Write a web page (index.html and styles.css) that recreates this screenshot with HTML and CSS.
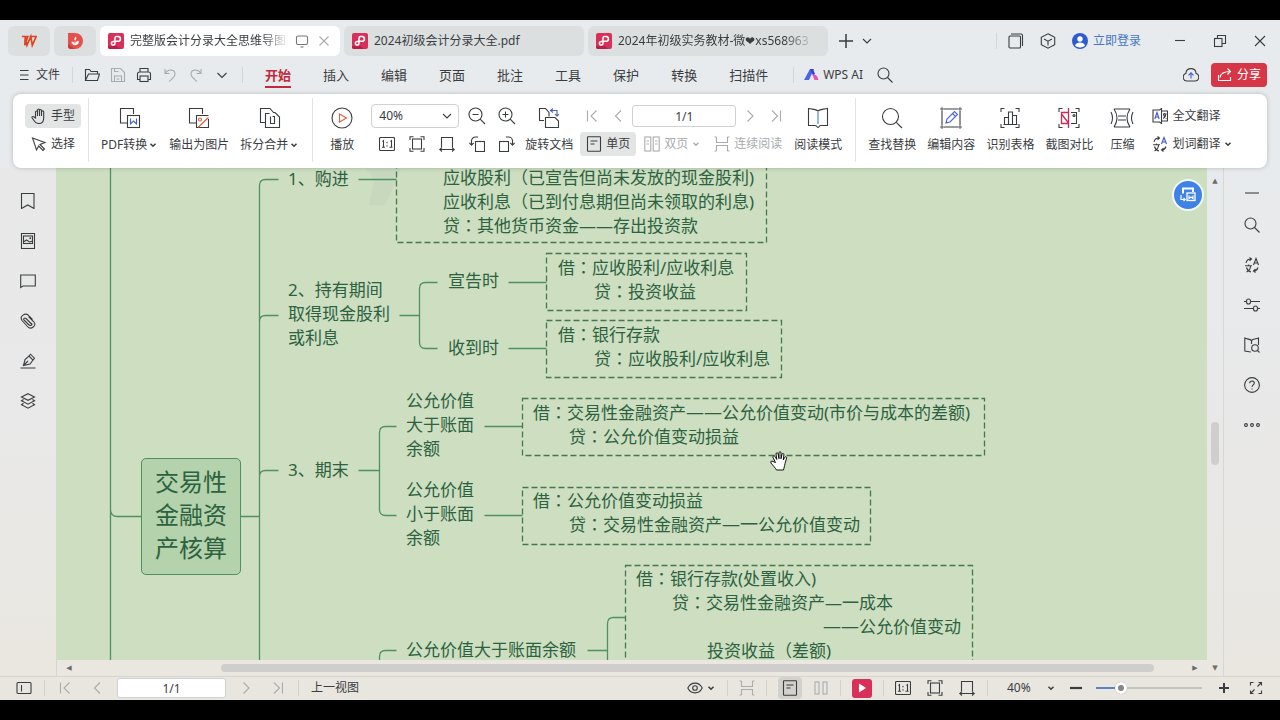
FILE: index.html
```html
<!DOCTYPE html>
<html lang="zh-CN">
<head>
<meta charset="utf-8">
<title>完整版会计分录大全思维导图.pdf - WPS</title>
<link rel="stylesheet" href="styles.css">
</head>
<body>
<svg class="sprite" aria-hidden="true">
  <symbol id="chev" viewBox="0 0 16 16"><path d="M4 6l4 4 4-4"/></symbol>
  <symbol id="pdf" viewBox="0 0 16 16"><rect width="16" height="16" rx="2" fill="#d8305a" stroke="none"/><path d="M0 13h9l3 3H2a2 2 0 0 1-2-2z" fill="#b8204a" stroke="none"/><path d="M7 8.500H5.500a1.800 1.800 0 1 0 1.500 1.800V5a1.500 1.500 0 0 1 1.500-1.500h1.500a2.200 2.200 0 0 1 0 4.800H7" stroke="#fff" stroke-width="1.500"/></symbol>
  <symbol id="first" viewBox="0 0 16 16"><path d="M3.500 2.500v11M12.500 2.500L7 8l5.500 5.500"/></symbol>
  <symbol id="prev" viewBox="0 0 16 16"><path d="M11 2.500L5.500 8l5.500 5.500"/></symbol>
  <symbol id="next" viewBox="0 0 16 16"><path d="M5.500 2.500L11 8l-5.500 5.500"/></symbol>
  <symbol id="last" viewBox="0 0 16 16"><path d="M12.500 2.500v11M4 2.500L9.500 8 4 13.500"/></symbol>
  <symbol id="search" viewBox="0 0 16 16"><circle cx="6.500" cy="6.500" r="5.500"/><path d="M10.500 10.500L15.500 15.500"/></symbol>
  <symbol id="one" viewBox="0 0 16 16"><rect x=".5" y="1.500" width="15" height="13" rx="1"/><path d="M3.500 5.500l1-.8v6.600M3 11.300h3M11.500 5.500l1-.8v6.600M10.500 11.300h3M8 6v1.300M8 9.300v1.300"/></symbol>
  <symbol id="fit" viewBox="0 0 16 16"><rect x="3.500" y="3" width="9" height="10"/><path d="M1 4V.8H4.500M11.500.8H15V4M15 12v3.200h-3.500M4.500 15.200H1V12"/></symbol>
  <symbol id="width" viewBox="0 0 16 16"><path d="M2.500 11V1.500h11V11M.8 13.500h14.400M3 11.500l-2.200 2 2.200 2M13 11.500l2.200 2-2.200 2"/></symbol>
  <symbol id="single" viewBox="0 0 16 16"><rect x="1.500" y=".8" width="13" height="14.400" rx=".5"/><path d="M4.500 5h7M4.500 8h4"/></symbol>
  <symbol id="double" viewBox="0 0 16 16"><rect x=".8" y="1" width="6" height="14"/><rect x="9.200" y="1" width="6" height="14"/><path d="M2.500 5h2.500M2.500 8h2.500M11 5h2.500M11 8h2.500"/></symbol>
  <symbol id="cont" viewBox="0 0 16 16"><path d="M2.500 1v5.500h11V1M2.500 15V9.500h11V15M.5 1h2M.5 15h2M13.500 1h2M13.500 15h2"/></symbol>
  <symbol id="trans" viewBox="0 0 16 16"><path d="M2 6a5 5 0 0 1 5-4M5.500.5L7.500 2 5.500 3.800M14 10.500a5 5 0 0 1-4 3.500M11.500 12.200L9.500 14l2 1.500M1 8.800h7M4.500 7.500v1.300M2.500 15c3-1.500 4-4 4-6M2.500 10.500c.5 2 2.500 4 4.500 4.500"/><path class="accent" d="M9.500 8L12 1.500 14.500 8M10.300 6h3.400"/></symbol>
</svg>

<div class="app">
  <header class="tabs">
    <button class="tab home" aria-label="WPS"><svg class="i" viewBox="0 0 16 16"><path d="M.8 3.500h3.400L6 12.300 9.800 3.500l1.500 8.800L15.200 3.500H8.500M4.300 3.500h2.500L3.800 12.300z" stroke="#dd4424" stroke-width="1.700"/></svg></button>
    <button class="tab home" aria-label="稻壳"><svg class="i" viewBox="0 0 16 16"><path d="M1 0h7a8 8 0 0 1 0 16H4a3 3 0 0 1-3-3z" fill="#e5504c" stroke="none"/><path d="M1 11v2a3 3 0 0 0 3 3h4z" fill="#c83c3c" stroke="none"/><path d="M8 12V8M8 12c-2 0-3.200-1.200-3.200-3.200C6.500 9 8 9.500 8 12c2.300 0 3.700-1.300 3.700-4C10 8 8 9.300 8 12" fill="#fff" stroke="#fff" stroke-width=".4"/><path d="M8 7.800c-1.200-1.400-.6-3.200.8-4.300 1 1.600.6 3.200-.8 4.300" fill="#fff" stroke="none"/></svg></button>
    <button class="tab doc on"><svg class="i"><use href="#pdf"/></svg><span class="name fade">完整版会计分录大全思维导图.pdf</span><svg class="i dim mon" viewBox="0 0 16 16"><rect x="2.500" y="3" width="11" height="8.500" rx="1.500"/><path d="M6.500 14h3"/></svg><svg class="i dim" viewBox="0 0 16 16"><path d="M3.500 3.500l9 9M12.500 3.500l-9 9"/></svg></button>
    <button class="tab doc"><svg class="i"><use href="#pdf"/></svg><span class="name">2024初级会计分录大全.pdf</span></button>
    <button class="tab doc"><svg class="i"><use href="#pdf"/></svg><span class="name fade">2024年初级实务教材-微❤xs568963</span></button>
    <button class="bare add" aria-label="新建"><svg class="i" viewBox="0 0 16 16"><path d="M8 1v14M1 8h14" stroke-width="1.500"/></svg></button>
    <button class="bare" aria-label="更多标签"><svg class="i"><use href="#chev"/></svg></button>
    <div class="window">
      <i class="sep tall"></i>
      <div class="pair"><button class="bare" aria-label="窗口"><svg class="i" viewBox="0 0 16 16"><rect x="1" y="3" width="11.500" height="12" rx="1"/><path d="M3 1h10a1.500 1.500 0 0 1 1.500 1.500V13"/></svg></button>
      <button class="bare" aria-label="应用"><svg class="i" viewBox="0 0 16 16"><path d="M8 .8l6.700 3.500v7.400L8 15.200l-6.700-3.500V4.300zM4 6l4 2.200L12 6M8 8.200v4.300"/></svg></button></div>
      <button class="bare login"><svg class="i" viewBox="0 0 16 16"><circle cx="8" cy="8" r="8" fill="#2f5bd0" stroke="none"/><circle cx="8" cy="6" r="2.700" fill="#fff" stroke="none"/><path d="M3 12.500c1-4 9-4 10 0-2 2.500-8 2.500-10 0z" fill="#fff" stroke="none"/></svg>立即登录</button>
      <div class="wbtns"><button class="bare" aria-label="最小化"><svg class="i" viewBox="0 0 16 16"><path d="M3 7.500h10"/></svg></button>
      <button class="bare" aria-label="还原"><svg class="i" viewBox="0 0 16 16"><rect x="2.500" y="5.500" width="7.500" height="8"/><path d="M5.500 5.500v-3h8v8H10"/></svg></button>
      <button class="bare" aria-label="关闭"><svg class="i" viewBox="0 0 16 16"><path d="M3 3l10 10M13 3L3 13"/></svg></button></div>
    </div>
  </header>

  <nav class="menu">
    <button class="bare file"><svg class="i s12" viewBox="0 0 12 12"><path d="M2 1.500h8.500M2 6h8.500M2 10.500h8.500"/></svg>文件</button>
    <i class="sep"></i>
    <div class="quick">
      <button class="bare" aria-label="打开"><svg class="i" viewBox="0 0 16 16"><path d="M1.500 13.500V2.500h4l1.500 2h6.500v2.500M1.500 13.500L4.500 7h11l-2 6.500z"/></svg></button>
      <button class="bare dim" aria-label="保存"><svg class="i" viewBox="0 0 16 16"><path d="M1.500 1.500h9l4 4v9h-13zM4.500 14.500V9h7v5.500M6.500 12h3M4.500 1.500v3h4"/></svg></button>
      <button class="bare" aria-label="打印"><svg class="i" viewBox="0 0 16 16"><path d="M4 5V1.500h8V5M4 12.500H1.500V7a2 2 0 0 1 2-2h9a2 2 0 0 1 2 2v5.500H12"/><rect x="4" y="9" width="8" height="5.500"/></svg></button>
      <button class="bare dim" aria-label="撤销"><svg class="i" viewBox="0 0 16 16"><path d="M3 2v4.500h4.500M3.500 6C6.500 1.500 13 2.500 13 7c0 3-3 5-6 7.500"/></svg></button>
      <button class="bare dim" aria-label="重做"><svg class="i" viewBox="0 0 16 16"><path d="M13 2v4.500H8.500M12.500 6C9.500 1.500 3 2.500 3 7c0 3 3 5 6 7.500"/></svg></button>
      <button class="bare" aria-label="更多"><svg class="i" viewBox="0 0 16 16"><path d="M3.500 6L8 10.500 12.500 6"/></svg></button>
    </div>
    <i class="sep"></i>
    <div class="cats">
      <button class="bare cur">开始</button><button class="bare">插入</button><button class="bare">编辑</button><button class="bare">页面</button><button class="bare">批注</button><button class="bare">工具</button><button class="bare">保护</button><button class="bare">转换</button><button class="bare">扫描件</button>
    </div>
    <i class="sep"></i>
    <button class="bare ai"><svg class="i" viewBox="0 0 16 16"><path d="M0 13L6 2h4L5 13z" fill="#4a66e8" stroke="none"/><path d="M6 2h3l2 5-2 1.500z" fill="#3b3fd0" stroke="none"/><path d="M8.500 8c3-1 5 .5 6 5h-4z" fill="#e255b4" stroke="none"/></svg>WPS AI</button>
    <button class="bare" aria-label="搜索"><svg class="i"><use href="#search"/></svg></button>
    <button class="bare cloud" aria-label="云"><svg class="i" viewBox="0 0 16 16"><path d="M4 14a3.800 3.800 0 0 1-1.200-7.400C3.500 0 12.500 0 13.200 6.600A3.800 3.800 0 0 1 12 14z"/><path d="M8 11.500V6M5.500 8.300L8 5.800l2.500 2.500" stroke="#3d5fd0"/></svg></button>
    <button class="share"><svg class="i" viewBox="0 0 16 16"><path d="M1.500 8v5.500h12V10M3 10.500c.5-4 4-6 10.500-6M10.500 1.500l3 3-3 3"/></svg>分享</button>
  </nav>

  <section class="ribbon">
    <div class="stack">
      <button class="small on"><svg class="i" viewBox="0 0 16 16"><path d="M4.500 10V4a1 1 0 0 1 2 0v4V2a1 1 0 0 1 2 0v6V2.500a1 1 0 0 1 2 0V8 4a1 1 0 0 1 2.200 0v6c0 3.500-1.700 5.500-4.700 5.500S4 14 1.200 10c-.7-1.200.6-2 1.500-1.200z"/></svg>手型</button>
      <button class="small"><svg class="i" viewBox="0 0 16 16"><path d="M1.500 2l12.500 4.500L9 8.500l4.500 4.500-1.500 1.500L7.700 10 5.500 14z"/></svg>选择</button>
    </div>
    <i class="sep s1"></i>
    <div class="bigs">
      <button class="big"><svg class="i b" viewBox="0 0 24 24"><path d="M9 17H2.500V2.500h13V8"/><rect x="9.500" y="9.500" width="12" height="12"/><path d="M12.500 12.500v5.500l3-3 3 3v-5.500" stroke="#3f63cc"/></svg><span>PDF转换<svg class="i c"><use href="#chev"/></svg></span></button>
      <button class="big"><svg class="i b" viewBox="0 0 24 24"><path d="M9 17H2.500V2.500h13V8"/><path d="M21.500 13v8.500h-12v-12h12"/><circle cx="13" cy="13.500" r="1.500" stroke="#d9613a"/><path d="M11 21.500l10.500-10" stroke="#d9613a"/></svg><span>输出为图片</span></button>
      <button class="big"><svg class="i b" viewBox="0 0 24 24"><path d="M7.500 16.500h-5v-14h9.500l3.500 4"/><path d="M11.500 7.500h-4v14h14V11L17 6.500h-2M12.500 10.500v7h4v-7h-2"/></svg><span>拆分合并<svg class="i c"><use href="#chev"/></svg></span></button>
    </div>
    <i class="sep s2"></i>
    <button class="big"><svg class="i b" viewBox="0 0 24 24"><circle cx="12" cy="12" r="10"/><path d="M9.500 8l7 4-7 4z" stroke="#d9613a"/></svg><span>播放</span></button>
    <div class="stack zoom">
      <div class="row"><label class="pick"><select aria-label="缩放比例"><option>40%</option></select><svg class="i"><use href="#chev"/></svg></label>
        <button class="ib" aria-label="缩小"><svg class="i l" viewBox="0 0 18 18"><circle cx="7.500" cy="7.500" r="6.500"/><path d="M12.200 12.200L17 17M4.500 7.500h6"/></svg></button>
        <button class="ib" aria-label="放大"><svg class="i l" viewBox="0 0 18 18"><circle cx="7.500" cy="7.500" r="6.500"/><path d="M12.200 12.200L17 17M4.500 7.500h6M7.500 4.500v6"/></svg></button></div>
      <div class="row in">
        <button class="ib" aria-label="实际大小"><svg class="i"><use href="#one"/></svg></button>
        <button class="ib" aria-label="适合页面"><svg class="i"><use href="#fit"/></svg></button>
        <button class="ib" aria-label="适合宽度"><svg class="i"><use href="#width"/></svg></button>
        <button class="ib" aria-label="向左旋转"><svg class="i" viewBox="0 0 16 16"><rect x="6.500" y="5.500" width="9" height="10"/><path d="M9 1H6.500A4 4 0 0 0 2.500 5v4M.3 6.800l2.200 2.400 2.200-2.400"/></svg></button>
        <button class="ib" aria-label="向右旋转"><svg class="i" viewBox="0 0 16 16"><rect x=".5" y="5.500" width="9" height="10"/><path d="M7 1h2.500a4 4 0 0 1 4 4v4M11.300 6.800l2.200 2.400 2.200-2.400"/></svg></button>
      </div>
    </div>
    <button class="big rot"><svg class="i b" viewBox="0 0 24 24"><path d="M7 14.500H2.500v-12h6l3.500 4v4"/><path d="M8.500 11.500h9.500l3.500 3.500v6.500h-13z"/><path d="M14 4.500h6v5M16 2.500l-2.500 2L16 6.500M18 8l2 2.200L22 8" stroke="#4a62c4"/></svg><span>旋转文档</span></button>
    <div class="stack">
      <div class="row nav">
        <button class="ib dim" aria-label="首页"><svg class="i"><use href="#first"/></svg></button>
        <button class="ib dim" aria-label="上一页"><svg class="i"><use href="#prev"/></svg></button>
        <input class="page" aria-label="页码" value="1/1">
        <button class="ib dim" aria-label="下一页"><svg class="i"><use href="#next"/></svg></button>
        <button class="ib dim" aria-label="末页"><svg class="i"><use href="#last"/></svg></button>
      </div>
      <div class="row views">
        <button class="small on"><svg class="i"><use href="#single"/></svg>单页</button>
        <button class="small flat dim"><svg class="i"><use href="#double"/></svg>双页<svg class="i c"><use href="#chev"/></svg></button>
        <button class="small flat dim"><svg class="i"><use href="#cont"/></svg>连续阅读</button>
      </div>
    </div>
    <button class="big read"><svg class="i b" viewBox="0 0 24 24"><path d="M12 5c-2-2-5-1.500-9.500-2.500v17h6.500c2 0 2 2 3 2s1-2 3-2h6.500v-17C17 3.500 14 3 12 5"/><path d="M12 6v12" stroke="#3f7fd0"/></svg><span>阅读模式</span></button>
    <i class="sep s3"></i>
    <div class="bigs">
      <button class="big"><svg class="i b" viewBox="0 0 24 24"><circle cx="10.500" cy="10.500" r="8"/><path d="M16.300 16.300L22 22"/></svg><span>查找替换</span></button>
      <button class="big"><svg class="i b" viewBox="0 0 24 24"><path d="M5 3h14M5 21h14M3 5v14M21 5v14" /><path d="M2 2h2v2H2zM20 2h2v2h-2zM2 20h2v2H2zM20 20h2v2h-2z" stroke-width=".8"/><path d="M7 17l1-4 7.500-7.500 3 3L11 16zM13.500 7.500l3 3" stroke="#4a62d4"/></svg><span>编辑内容</span></button>
      <button class="big"><svg class="i b" viewBox="0 0 24 24"><path d="M3 6V2.500h3.500M17.500 2.500H21V6M21 18v3.500h-3.500M6.500 21.500H3V18"/><path d="M6.500 18.500v-7h4v7zM10.500 18.500V6h4v12.500zM14.500 18.500V9.500h4v9zM5.500 18.500h14"/></svg><span>识别表格</span></button>
      <button class="big"><svg class="i b" viewBox="0 0 24 24"><path d="M2 6V2.500h3.500M18.500 2.500H22V6M22 18v3.500h-3.500M5.500 21.500H2V18M14 6.500h5.500v11H14"/><circle cx="17" cy="9.500" r="1"/><path d="M11.500 2v20M11.500 6.500h-7v11h7M4.500 8l7 9" stroke="#d02850" stroke-width="1.300"/></svg><span>截图对比</span></button>
      <button class="big press"><svg class="i b" viewBox="0 0 24 24"><path d="M4 3h16M4 21h16M8 10h8M8 14h8M4 3c4 6 4 12 0 18M20 3c-4 6-4 12 0 18M1 6c2 4 2 8 0 12M23 6c-2 4-2 8 0 12"/></svg><span>压缩</span></button>
    </div>
    <div class="stack last">
      <button class="small flat"><svg class="i" viewBox="0 0 16 16"><path d="M7.500 2H1v12h6.500l2 1.500v-15zM10 3h5.500v10H10M11 6h3.500M12.700 5v1M11.300 10.500c1.500-1 2.500-2.500 2.500-4.500M11.500 6.500c.5 2 1.500 3.300 3 4"/><path class="accent" d="M2.800 11L5 4.500 7.200 11M3.500 9h3"/></svg>全文翻译</button>
      <button class="small flat two"><svg class="i"><use href="#trans"/></svg>划词翻译<svg class="i c"><use href="#chev"/></svg></button>
    </div>
  </section>

  <main class="work">
    <aside class="side left">
      <button class="bare" aria-label="书签"><svg class="i" viewBox="0 0 16 16"><path d="M1.500.5h12.500v15L7.800 12 1.500 15.500z"/></svg></button>
      <button class="bare" aria-label="缩略图"><svg class="i" viewBox="0 0 16 16"><rect x="1.500" y=".5" width="13" height="15"/><rect x="3.500" y="3" width="9" height="7.500"/><path d="M3.500 9l3-2 3 2 3-1"/><circle cx="10.300" cy="5.300" r=".4"/></svg></button>
      <button class="bare" aria-label="批注"><svg class="i" viewBox="0 0 16 16"><path d="M.7 14.500V2h14.600v11H3z"/></svg></button>
      <button class="bare" aria-label="附件"><svg class="i" viewBox="0 0 16 16"><path d="M12.500 6.500L8.200 2.200C5.500-.5-1 3 2 7.500l5.500 6c3.500 4 9.500-1 6.500-4.500L8.500 3.500M11.500 11L6 5.500C4.500 4 3 6 4 7l4.500 4.500c2 2 4.500.5 3-1.500"/></svg></button>
      <button class="bare" aria-label="签名"><svg class="i" viewBox="0 0 16 16"><path d="M.5 15h15M3.500 12.500l1.500-6 4-3.500 4 4-3 4zM3.500 12.500L8 8M9 3l1.500-1.800 4 4L13 7"/></svg></button>
      <button class="bare" aria-label="图层"><svg class="i" viewBox="0 0 16 16"><path d="M8 .7l6.500 3.300L8 7.300 1.500 4zM3.500 6.500l-2 1.300L8 11.200l6.500-3.400-2-1.300M3.500 10.300l-2 1.400L8 15.200l6.500-3.500-2-1.400"/></svg></button>
    </aside>

    <div class="canvas">
      <svg class="wires" aria-hidden="true">
        <g transform="translate(-55.500 -167.500)">
          <path class="mark" d="M368 205l6-25-8-12h34l-4 12-12 25z"/>
          <path d="M110 167v494M110 509q0 7 7 7h24M240 516h19M259 661V185q0-6 6-6h13M259 321q0-6 6-6h13M259 476q0-6 6-6h13M358 179h38
          M399 315h20M437 282h-12q-6 0-6 6v54q0 6 6 6h12M508 282h38M508 348h38
          M358 470h21M396 426h-11q-6 0-6 6v77q0 6 6 6h11M484 426h38M484 515h38
          M379 661v-5q0-6 6-6h11M587 650h20M607 661v-38q0-6 6-6h12"/>
          <g class="dash"><rect x="396" y="120" width="370" height="122"/><rect x="546" y="253" width="200" height="57"/><rect x="546" y="320" width="235" height="57"/><rect x="522" y="398" width="462" height="57"/><rect x="522" y="487" width="348" height="57"/><rect x="625" y="565" width="347" height="140"/></g>
        </g>
      </svg>
      <div class="node root">交易性<br>金融资<br>产核算</div>
      <div class="node n-buy">1、购进</div>
      <div class="node n-buy-e">应收股利<b>（</b>已宣告但尚未发放的现金股利)<br>应收利息<b>（</b>已到付息期但尚未领取的利息)<br>贷<b>：</b>其他货币资金——存出投资款</div>
      <div class="node n-hold">2、持有期间<br>取得现金股利<br>或利息</div>
      <div class="node n-ann">宣告时</div>
      <div class="node n-ann-e"><p>借<b>：</b>应收股利/应收利息</p><p class="t">贷<b>：</b>投资收益</p></div>
      <div class="node n-rec">收到时</div>
      <div class="node n-rec-e"><p>借<b>：</b>银行存款</p><p class="t">贷<b>：</b>应收股利/应收利息</p></div>
      <div class="node n-end">3、期末</div>
      <div class="node n-gt">公允价值<br>大于账面<br>余额</div>
      <div class="node n-gt-e"><p>借<b>：</b>交易性金融资产<span class="long">——</span>公允价值变动(市价与成本的差额)</p><p class="t">贷<b>：</b>公允价值变动损益</p></div>
      <div class="node n-lt">公允价值<br>小于账面<br>余额</div>
      <div class="node n-lt-e"><p>借<b>：</b>公允价值变动损益</p><p class="t">贷<b>：</b>交易性金融资产<span class="long">—一</span>公允价值变动</p></div>
      <div class="node n-sell">公允价值大于账面余额</div>
      <div class="node n-sell-e"><p>借<b>：</b>银行存款(处置收入)</p><p class="t">贷<b>：</b>交易性金融资产—一成本</p><p class="t4"><span class="long">——</span>公允价值变动</p><p class="t2">投资收益<b>（</b>差额)</p></div>
      <svg class="hand" viewBox="0 0 18 20" aria-hidden="true"><path d="M5.500 11.500L3 6.500C2.500 5 4.300 4.300 5 5.500l1.800 3L6 3c0-1.500 1.800-1.700 2-.3l1 5V1.800c0-1.500 2-1.500 2 0v6l1-4.500c.3-1.400 2-1 1.900.3L13.300 9l1.500-2.700c.7-1.200 2.200-.4 1.800.8L15 12.500c-.5 3-1 4-1.500 6.500h-7C5.500 17 2.500 14 1 12c-1-1.500.7-2.600 2-1.500z" fill="#fff" stroke="#111"/></svg>
      <button class="float" aria-label="转为Word"><svg class="i" viewBox="0 0 16 16"><path d="M3 6.500V1.500h10V5" stroke-width="2"/><rect x="7" y="6" width="8" height="7.500" stroke-width="1.300"/><path d="M9 8.500v3l2-1.500 2 1.500v-3M1 8v4.500h4M3.500 10.800L5.200 12.500 3.500 14.200" stroke-width="1.200"/></svg></button>
    </div>

    <div class="vbar"><button class="arr" aria-label="向上">▲</button><i class="thumb"></i></div>

    <aside class="side right">
      <button class="bare minus" aria-label="收起"><svg class="i" viewBox="0 0 16 16"><path d="M1 8h14" stroke="#8b8e90" stroke-width="2"/></svg></button>
      <button class="bare" aria-label="查找"><svg class="i"><use href="#search"/></svg></button>
      <button class="bare mono" aria-label="翻译"><svg class="i"><use href="#trans"/></svg></button>
      <button class="bare" aria-label="设置"><svg class="i" viewBox="0 0 16 16"><path d="M0 4.500h2.500M6.500 4.500H16M0 11.500h9.500M13.500 11.500H16"/><rect x="2.500" y="2" width="4" height="5" rx="2"/><rect x="9.500" y="9" width="4" height="5" rx="2"/></svg></button>
      <button class="bare" aria-label="查词"><svg class="i" viewBox="0 0 16 16"><path d="M7.500 3.500C6 2 3 2 .8 1v13l6 1M7.500 3.500V7M7.500 3.500C9 2 12 2 14.500 1v7"/><circle cx="11" cy="11" r="3.300"/><path d="M13.400 13.400L15.500 15.500"/></svg></button>
      <button class="bare" aria-label="帮助"><svg class="i" viewBox="0 0 16 16"><circle cx="8" cy="8" r="7.400"/><path d="M5.700 6.300c0-3 4.600-3 4.600-.2C10.300 8 8 7.800 8 10M8 11.500v1"/></svg></button>
      <button class="bare" aria-label="更多"><svg class="i" viewBox="0 0 16 16"><circle cx="2" cy="8" r="1.400"/><circle cx="8" cy="8" r="1.400"/><circle cx="14" cy="8" r="1.400"/></svg></button>
    </aside>

    <div class="hbar"><button class="arr" aria-label="向左">◀</button><div class="track"><i class="thumb"></i></div><button class="arr r" aria-label="向右">▶</button></div>
    <div class="corner"><button class="arr" aria-label="向下">▼</button></div>
  </main>

  <footer class="status">
    <button class="bare" aria-label="侧栏"><svg class="i" viewBox="0 0 16 16"><rect x="1" y="2.500" width="14" height="11" rx="1"/><path d="M5.500 5v6.500"/></svg></button>
    <i class="sep"></i>
    <div class="pair dim"><button class="bare" aria-label="首页"><svg class="i"><use href="#first"/></svg></button><button class="bare" aria-label="上一页"><svg class="i"><use href="#prev"/></svg></button></div>
    <input class="page" aria-label="当前页" value="1/1">
    <div class="pair dim"><button class="bare" aria-label="下一页"><svg class="i"><use href="#next"/></svg></button><button class="bare" aria-label="末页"><svg class="i"><use href="#last"/></svg></button></div>
    <i class="sep"></i>
    <button class="bare">上一视图</button>
    <div class="sview">
      <button class="bare eye" aria-label="护眼"><svg class="i" viewBox="0 0 16 16"><path d="M.8 8C4 1.500 12 1.500 15.200 8 12 14.500 4 14.500.8 8z"/><circle cx="8" cy="8" r="2.300"/></svg><svg class="i c"><use href="#chev"/></svg></button>
      <i class="sep"></i>
      <button class="bare dim" aria-label="连续"><svg class="i"><use href="#cont"/></svg></button>
      <i class="sep"></i>
      <button class="bare sel" aria-label="单页"><svg class="i"><use href="#single"/></svg></button>
      <button class="bare dim" aria-label="双页"><svg class="i" viewBox="0 0 16 16"><rect x="2" y="2" width="4" height="12"/><rect x="10" y="2" width="4" height="12"/></svg></button>
      <i class="sep"></i>
      <button class="play" aria-label="播放"><svg class="i" viewBox="0 0 16 16"><path d="M5.500 4.500L11 8l-5.500 3.500z" fill="#fff"/></svg></button>
      <i class="sep"></i>
      <div class="pair"><button class="bare" aria-label="实际大小"><svg class="i"><use href="#one"/></svg></button><button class="bare" aria-label="适合页面"><svg class="i"><use href="#fit"/></svg></button><button class="bare" aria-label="适合宽度"><svg class="i"><use href="#width"/></svg></button></div>
    </div>
    <i class="sep"></i>
    <label class="zsel"><select aria-label="缩放"><option>40%</option></select><svg class="i c"><use href="#chev"/></svg></label>
    <button class="bare" aria-label="缩小"><svg class="i" viewBox="0 0 16 16"><path d="M2 8h12" stroke-width="2.200"/></svg></button>
    <input class="slide" type="range" min="0" max="100" value="20" aria-label="缩放滑块">
    <button class="bare w20" aria-label="放大"><svg class="i" viewBox="0 0 16 16"><path d="M3 8h10M8 3v10" stroke-width="2"/></svg></button>
    <button class="bare w20" aria-label="全屏"><svg class="i" viewBox="0 0 16 16"><path d="M2.500 5.500v-3h3M10.500 2.500h3v3M13.500 2.500L9.500 6.500M13.500 10.500v3h-3M5.500 13.500h-3v-3M2.500 13.500l4-4"/></svg></button>
  </footer>
</div>
</body>
</html>
```
FILE: styles.css
```css
* { box-sizing: border-box; }
body {
  margin: 0;
  padding: 20px 0;
  height: 100vh;
  background: #000;
  overflow: hidden;
  font: 12px/16px "Noto Sans", "Noto Sans CJK SC", sans-serif;
  color: #3a3d3f;
}
.sprite { position: absolute; width: 0; height: 0; }
button, input, select { font: inherit; color: inherit; margin: 0; }
button { border: 0; padding: 0; background: none; white-space: nowrap; }
p { margin: 0; }

.app {
  --accent: #3f55d0;
  height: 100%;
  display: flex;
  flex-direction: column;
  background: linear-gradient(180deg, #e7ebed 0%, #e8eaec 35%, #e9e8e7 65%, #eae7e0 100%);
}

.i { width: 16px; height: 16px; flex: none; display: block; fill: none; stroke: currentColor; stroke-width: 1.1; }
.i.b { width: 24px; height: 24px; }
.i.l { width: 18px; height: 18px; }
.i.c { width: 10px; height: 10px; stroke-width: 2.4; }
.i.s12 { width: 12px; height: 12px; }
.dim { color: #a9acae; }
.accent { stroke: var(--accent); }
.mono { --accent: currentColor; }
.bare { display: flex; align-items: center; justify-content: center; flex: none; }
.sep { width: 1px; height: 16px; background: #d3d6d7; flex: none; }
.pair { display: flex; gap: 16px; }

/* document tabs */
.tabs { display: flex; align-items: center; gap: 4px; padding: 6px 12px 2px 8px; flex: none; }
.tab { height: 30px; border-radius: 6px; background: #dcdfe0; display: flex; align-items: center; }
.home { width: 42px; justify-content: center; }
.doc { width: 240px; padding: 0 8px; gap: 6px; }
.doc.on { background: #fff; }
.name { flex: 1; overflow: hidden; text-align: left; }
.fade { -webkit-mask-image: linear-gradient(90deg, #000 84%, transparent); mask-image: linear-gradient(90deg, #000 84%, transparent); }
.doc:not(.on) .name { margin-right: 5px; }
.mon { stroke: #777; }
.add { width: 24px; margin-left: 2px; margin-right: -3px; }
.window { margin-left: auto; display: flex; align-items: center; }
.window .tall { margin-right: 11px; }
.login { color: #4678c8; gap: 5px; margin: 0 31px 0 16px; }
.wbtns { display: flex; gap: 24px; }

/* menu row */
.menu { display: flex; align-items: center; height: 36px; padding: 0 13px 2px 18px; flex: none; }
.file { gap: 6px; }
.menu .sep { margin: 0 11px 0 12px; }
.quick { display: flex; gap: 10px; }
.cats { display: flex; gap: 32px; font-size: 13px; margin: 0 13px 0 11px; }
.cats .bare { height: 26px; border-bottom: 2px solid transparent; padding-top: 2px; }
.cats .cur { color: #c02a3c; font-weight: 700; border-color: #c02a3c; }
.ai { gap: 3px; margin-right: 14px; }
.menu .ai { margin-left: -1px; }
.cloud { margin-left: auto; margin-right: 12px; }
.share { width: 56px; height: 24px; border-radius: 4px; background: #d63646; color: #fff; display: flex; align-items: center; justify-content: center; gap: 4px; }

/* ribbon */
.ribbon {
  margin: 0 13px;
  padding: 10px 12px 11px;
  background: #fff;
  border-radius: 8px;
  box-shadow: 0 0 4px rgba(60, 70, 70, .3);
  display: flex;
  flex: none;
  position: relative;
  z-index: 2;
}
.ribbon .sep { height: 64px; margin-top: -6px; margin-bottom: -6px; background: #e2e3e4; }
.s1 { margin-left: 7px; margin-right: 12px; }
.s2 { margin-left: 13px; margin-right: 17px; }
.s3 { margin-left: 13px; margin-right: 12px; }
.stack { display: flex; flex-direction: column; gap: 4px; }
.row { display: flex; gap: 6px; align-items: center; height: 24px; }
.row.in { padding-left: 4px; }
.row.nav { gap: 2px; }
.row.views { gap: 8px; }
.small { height: 24px; padding: 0 6px; gap: 4px; display: flex; align-items: center; border-radius: 4px; }
.small.on { background: #e3e4e4; }
.small.flat { padding: 0; }
.small .c { margin-left: -1px; }
.views .flat:last-child { margin-left: 5px; }
.bigs { display: flex; gap: 11px; }
.big { display: flex; flex-direction: column; align-items: center; padding-top: 2px; gap: 3px; flex: none; }
.big span { display: flex; align-items: center; gap: 1px; height: 24px; }
.zoom { margin-left: 17px; }
.pick { width: 88px; height: 24px; position: relative; }
.pick select { appearance: none; width: 100%; height: 100%; border: 1px solid #cfd1d2; border-radius: 4px; background: #fff; padding: 0 7px; }
.pick .i { position: absolute; right: 4px; top: 4px; }
.ib { width: 24px; height: 24px; display: flex; align-items: center; justify-content: center; }
.rot { margin: 0 7px 0 6px; }
.page { width: 104px; height: 22px; border: 1px solid #cfd1d2; border-radius: 3px; background: #fff; text-align: center; padding: 0; }
.read { margin-left: 6px; }
.press { margin-left: 6px; }
.last { margin-left: 18px; }

/* work area */
.work { flex: 1; min-height: 0; display: grid; grid-template-columns: 56px minmax(0, 1fr) 16px 57px; grid-template-rows: minmax(0, 1fr) 16px; }
.side { grid-row: 1 / 3; display: flex; flex-direction: column; }
.side .bare { height: 40px; }
.left { padding-top: 13px; grid-column: 1; background: linear-gradient(180deg, #e8e8e8, #e9e9e9 50%, #eae7e0); }
.right { padding-top: 12px; grid-column: 4; grid-row: 1 / 3; border-left: 1px solid #d5d8d8; }
.side .minus { height: 25px; }
.canvas { grid-column: 2; grid-row: 1; position: relative; overflow: hidden; background: #cddec1; color: #2c6240; }
.vbar { grid-column: 3; grid-row: 1; display: grid; grid-template-rows: 21px 49fr 9fr 41fr; justify-items: center; }
.vbar .arr { padding-top: 5px; }
.thumb { display: block; width: 8px; border-radius: 4px; background: #cfcecc; }
.vbar .thumb { grid-row: 3; }
.hbar { grid-column: 2; grid-row: 2; display: flex; align-items: center; padding: 0 4px; border-left: 1px solid #d6d4cf; }
.track { flex: 1; }
.track .thumb { width: auto; height: 8px; margin: 0 3% 0 13%; }
.corner { grid-column: 3; grid-row: 2; display: flex; align-items: center; justify-content: center; }
.arr { width: 16px; height: 16px; font: 7px/16px "DejaVu Sans", sans-serif; color: #6b6c6c; flex: none; }

/* mind map */
.wires { position: absolute; left: 0; top: 0; width: 100%; height: 100%; fill: none; stroke: #4f9163; stroke-width: 1.3; }
.wires .mark { fill: #c7d8be; stroke: none; }
.dash { stroke: #47764f; stroke-width: 1.3; stroke-dasharray: 6 3; }
.node { position: absolute; font-size: 17px; line-height: 24px; white-space: nowrap; }
.node b { font-family: "Noto Sans CJK TC", sans-serif; font-weight: 400; font-feature-settings: "locl" 0; line-height: 0; }
.node .long { font-size: 18px; line-height: 0; }
.node .t { padding-left: 36px; }
.node .t2 { padding-left: 71px; }
.node .t4 { padding-left: 187px; }
.root { left: 85px; top: 290px; width: 100px; height: 117px; padding: 6px 0; border: 1px solid #4f9163; border-radius: 5px; background: #b4d2ab; font-size: 24px; line-height: 33px; text-align: center; }
.n-buy { left: 232px; top: -1px; }
.n-buy-e { left: 387px; top: -2px; }
.n-hold { left: 232px; top: 110px; }
.n-ann { left: 392px; top: 101px; }
.n-ann-e { left: 502px; top: 88px; }
.n-rec { left: 392px; top: 168px; }
.n-rec-e { left: 502px; top: 155px; }
.n-end { left: 232px; top: 290px; }
.n-gt { left: 350px; top: 221px; }
.n-gt-e { left: 477px; top: 233px; }
.n-lt { left: 350px; top: 310px; }
.n-lt-e { left: 477px; top: 321px; }
.n-sell { left: 350px; top: 470px; }
.n-sell-e { left: 580px; top: 399px; }
.hand { position: absolute; left: 714px; top: 283px; width: 18px; height: 20px; }
.float { position: absolute; right: 3px; top: 11px; width: 32px; height: 32px; border-radius: 16px; border: 2px solid #f2f8fc; background: #3f82e6; color: #fff; display: flex; align-items: center; justify-content: center; }

/* status bar */
.status { flex: none; height: 24px; border-top: 1px solid #d6d4ce; background: #e9e6df; display: flex; align-items: center; gap: 12px; padding: 0 14px 1px 16px; }
.status .page { width: 109px; height: 20px; }
.status .sep { background: #d2cfc9; }
.sview { margin-left: auto; display: flex; align-items: center; gap: 11px; }
.eye { gap: 3px; }
.sel { width: 24px; height: 22px; background: #d3d1cb; border-radius: 4px; }
.play { width: 20px; height: 19px; border-radius: 3px; background: #d9305a; color: #fff; display: flex; align-items: center; justify-content: center; }
.zsel { position: relative; width: 56px; }
.zsel select { appearance: none; border: 0; background: none; width: 100%; padding: 0 7px; display: block; }
.zsel .i { position: absolute; right: 0; top: 3px; }
.w20 { width: 20px; }
.slide { appearance: none; width: 106px; height: 12px; background: none; }
.slide::-webkit-slider-runnable-track { height: 2px; background: linear-gradient(90deg, #5b82c8 22%, #c5c3be 22%); }
.slide::-webkit-slider-thumb { appearance: none; width: 12px; height: 12px; margin-top: -5px; border-radius: 6px; border: 3px solid #fff; background: #858585; box-shadow: 0 0 1px #999; }
```
